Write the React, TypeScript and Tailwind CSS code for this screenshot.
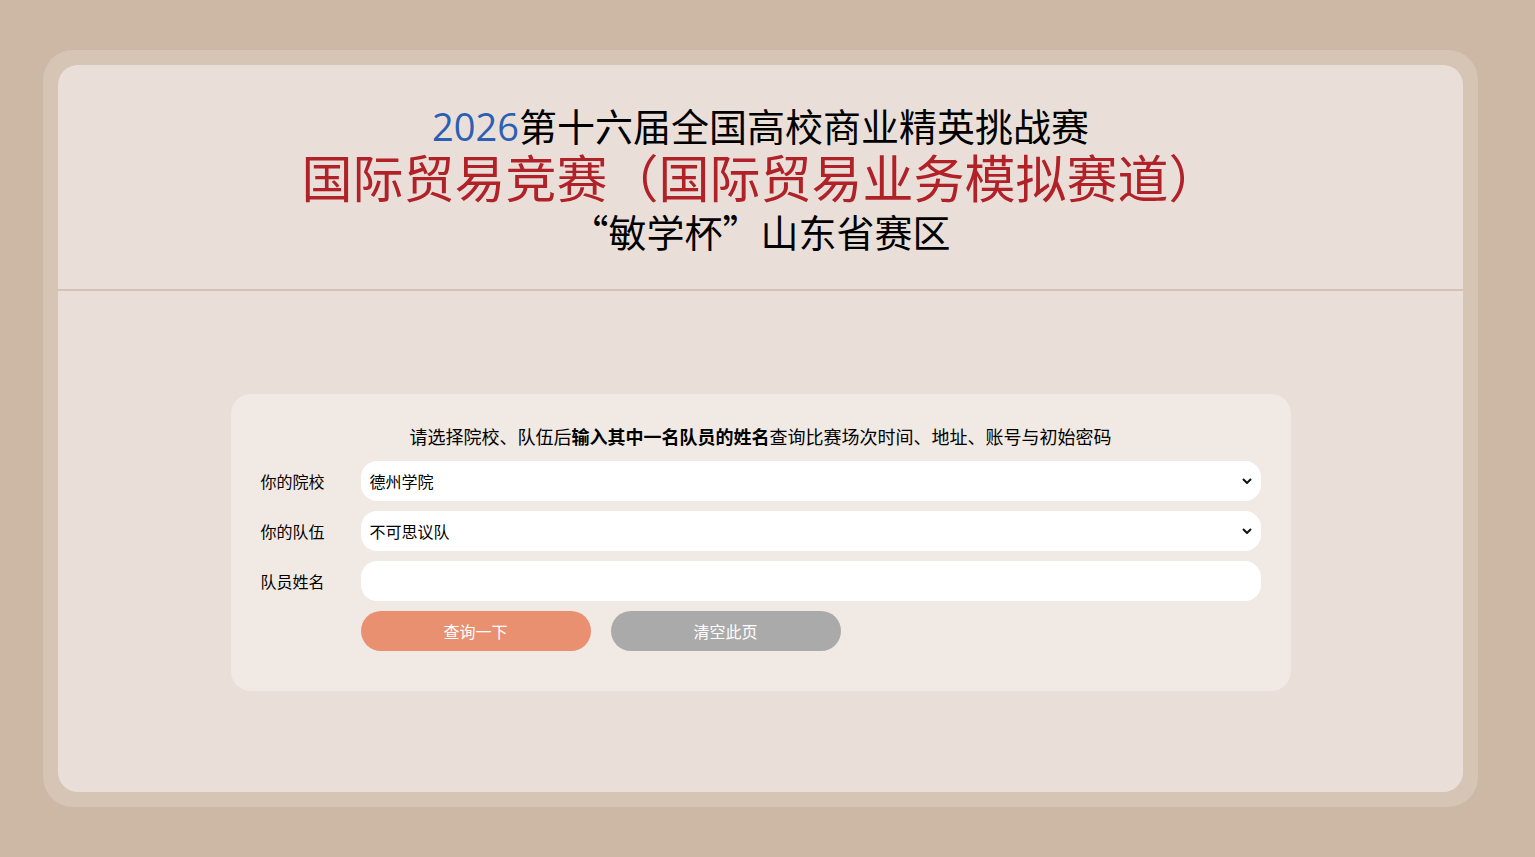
import { useState } from "react";

const schools = ["德州学院"];
const teams = ["不可思议队"];

function FieldRow({ label, children }: { label: string; children: React.ReactNode }) {
  return (
    <div className="flex items-center">
      <label className="w-[100px] shrink-0 text-[16px] text-black">{label}</label>
      <div className="flex-1">{children}</div>
    </div>
  );
}

function Select({
  value,
  options,
  onChange,
}: {
  value: string;
  options: string[];
  onChange: (v: string) => void;
}) {
  return (
    <div className="relative">
      <select
        value={value}
        onChange={(e) => onChange(e.target.value)}
        className="h-[40px] w-full appearance-none rounded-[16px] border-0 bg-white pr-[30px] pl-[9px] text-[16px] text-black outline-none"
      >
        {options.map((o) => (
          <option key={o}>{o}</option>
        ))}
      </select>
      <svg
        viewBox="0 0 10 6"
        className="pointer-events-none absolute top-1/2 right-[9px] h-[6px] w-[10px] -translate-y-1/2"
        fill="none"
        stroke="#111"
        strokeWidth="2"
      >
        <path d="M1 1l4 4 4-4" />
      </svg>
    </div>
  );
}

export default function App() {
  const [school, setSchool] = useState(schools[0]);
  const [team, setTeam] = useState(teams[0]);
  const [name, setName] = useState("");

  const clear = () => {
    setName("");
  };

  return (
    <div
      className="min-h-screen bg-[#cdb7a5] pt-[50px] pb-[70px]"
      style={{ fontFamily: '"Noto Sans CJK SC", "Noto Sans", sans-serif' }}
    >
      <div className="ml-[43px] w-[1435px] rounded-[30px] bg-[#d6c4b5] p-[15px]">
        <div className="overflow-hidden rounded-[20px] bg-[#eadfd8]">
          {/* title block */}
          <header className="border-b-[2px] border-[#d3c2b5] pt-[35px] pb-[28px] text-center">
            <h1 className="text-[38px] leading-[50px] font-normal text-black">
              <span className="text-[#2b5fb4]" style={{ fontFamily: '"Open Sans", sans-serif' }}>
                2026
              </span>
              第十六届全国高校商业精英挑战赛
            </h1>
            <h2 className="text-[51px] leading-[50px] font-normal text-[#b02128]">
              国际贸易竞赛（国际贸易业务模拟赛道）
            </h2>
            <h3 className="text-[38px] leading-[60px] font-normal text-black">“敏学杯”山东省赛区</h3>
          </header>

          <main className="flex justify-center pt-[103px] pb-[101px]">
            <form
              className="w-[1060px] rounded-[20px] bg-[#f1e9e4] px-[30px] pt-[30px] pb-[40px]"
              onSubmit={(e) => e.preventDefault()}
            >
              <p className="mb-[12px] text-center text-[18px] leading-[25px] text-black">
                请选择院校、队伍后<b className="font-bold">输入其中一名队员的姓名</b>
                查询比赛场次时间、地址、账号与初始密码
              </p>
              <div className="flex flex-col gap-[10px]">
                <FieldRow label="你的院校">
                  <Select value={school} options={schools} onChange={setSchool} />
                </FieldRow>
                <FieldRow label="你的队伍">
                  <Select value={team} options={teams} onChange={setTeam} />
                </FieldRow>
                <FieldRow label="队员姓名">
                  <input
                    value={name}
                    onChange={(e) => setName(e.target.value)}
                    className="h-[40px] w-full rounded-[16px] border-0 bg-white px-[9px] text-[16px] outline-none"
                  />
                </FieldRow>
                <div className="flex gap-[20px] pl-[100px]">
                  <button
                    type="submit"
                    className="h-[40px] w-[230px] rounded-full bg-[#e89070] text-[16px] text-white"
                  >
                    查询一下
                  </button>
                  <button
                    type="button"
                    onClick={clear}
                    className="h-[40px] w-[230px] rounded-full bg-[#aaaaaa] text-[16px] text-white"
                  >
                    清空此页
                  </button>
                </div>
              </div>
            </form>
          </main>
        </div>
      </div>
    </div>
  );
}
